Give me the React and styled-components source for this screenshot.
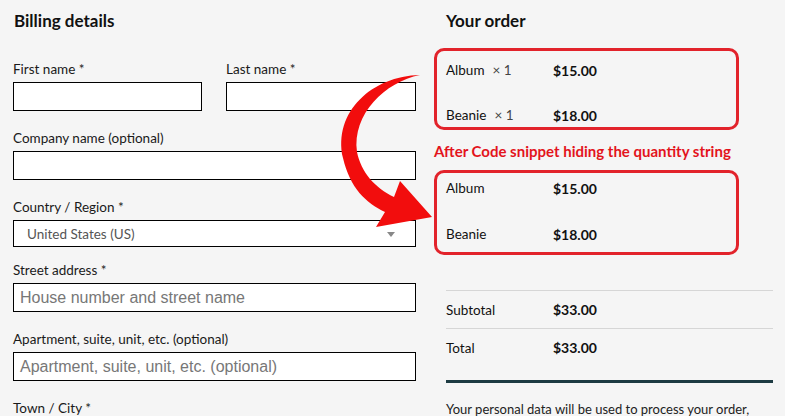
import React from 'react';
import styled, { createGlobalStyle } from 'styled-components';

const GlobalStyle = createGlobalStyle`
  html, body {
    margin: 0;
    background: #f5f5f5;
    font-family: Lato, "Open Sans", sans-serif;
    color: #111;
  }
`;

const fields = [
  { label: 'Company name (optional)' },
  { label: 'Country / Region *', select: 'United States (US)' },
  { label: 'Street address *', placeholder: 'House number and street name' },
  { label: 'Apartment, suite, unit, etc. (optional)', placeholder: 'Apartment, suite, unit, etc. (optional)' },
  { label: 'Town / City *', noInput: true },
];

const before = [
  { name: 'Album', qty: '× 1', price: '$15.00' },
  { name: 'Beanie', qty: '× 1', price: '$18.00' },
];

const after = [
  { name: 'Album', price: '$15.00' },
  { name: 'Beanie', price: '$18.00' },
];

const App = () => {
  return (
    <>
      <GlobalStyle />
      <Page>
        <Billing>
          <Heading>Billing details</Heading>
          <NameRow>
            <Field>
              <Label>First name *</Label>
              <TextBox />
            </Field>
            <Field>
              <Label>Last name *</Label>
              <TextBox />
            </Field>
          </NameRow>
          {fields.map((f) => (
            <Field key={f.label} $tight={!!f.select}>
              <Label>{f.label}</Label>
              {f.select ? (
                <SelectBox>
                  {f.select}
                  <Caret />
                </SelectBox>
              ) : f.noInput ? null : (
                <TextBox>{f.placeholder && <Placeholder>{f.placeholder}</Placeholder>}</TextBox>
              )}
            </Field>
          ))}
        </Billing>

        <Order>
          <OrderHeading>Your order</OrderHeading>
          <RedBox $pad="7px 9px 0" $gap={21}>
            {before.map((r) => (
              <ItemRow key={r.name}>
                <span>
                  {r.name}
                  <Qty>{r.qty}</Qty>
                </span>
                <Price>{r.price}</Price>
              </ItemRow>
            ))}
          </RedBox>
          <Caption>After Code snippet hiding the quantity string</Caption>
          <RedBox $pad="3px 9px 6px" $gap={22}>
            {after.map((r) => (
              <ItemRow key={r.name}>
                <span>{r.name}</span>
                <Price>{r.price}</Price>
              </ItemRow>
            ))}
          </RedBox>
          <Totals>
            <TotalRow>
              <span>Subtotal</span>
              <Price>$33.00</Price>
            </TotalRow>
            <TotalRow>
              <span>Total</span>
              <Price>$33.00</Price>
            </TotalRow>
            <ThickRule />
            <Note>Your personal data will be used to process your order,</Note>
          </Totals>
        </Order>

        <Arrow viewBox="0 0 785 416" width="785" height="416">
          <path
            d="M 420 75 C 372 76, 333 112, 343 158 C 350 188, 366 203, 385 212 L 376 227 L 432 217 L 400 181 L 394 197 C 375 188, 361 172, 357 152 C 352 114, 385 82, 420 75 Z"
            fill="#f20d0d"
          />
        </Arrow>
      </Page>
    </>
  );
};

export default App;

const Page = styled.div`
  position: relative;
  display: grid;
  grid-template-columns: 403px 339px;
  column-gap: 18px;
  padding: 10px 0 0 13px;
  height: 416px;
  box-sizing: border-box;
  overflow: hidden;
`;

const Billing = styled.div`
  display: flex;
  flex-direction: column;
`;

const Heading = styled.h2`
  margin: 0 0 27px 1px;
  font-size: 17px;
  line-height: 22px;
  font-weight: 700;
`;

const NameRow = styled.div`
  display: grid;
  grid-template-columns: 189px 190px;
  column-gap: 24px;
`;

const Field = styled.div`
  display: flex;
  flex-direction: column;
  margin-bottom: ${(p) => (p.$tight ? 13 : 17)}px;
`;

const Label = styled.div`
  font-size: 13.5px;
  line-height: 20px;
  margin-bottom: 3px;
  color: #1a1a1a;
`;

const TextBox = styled.div`
  height: 29px;
  box-sizing: border-box;
  border: 1px solid #000;
  background: #fff;
  display: flex;
  align-items: center;
  padding-left: 6px;
`;

const Placeholder = styled.span`
  font-family: "Liberation Sans", Arial, sans-serif;
  font-size: 16px;
  color: #777;
`;

const SelectBox = styled.div`
  position: relative;
  height: 27px;
  box-sizing: border-box;
  border: 1px solid #000;
  background: #fff;
  display: flex;
  align-items: center;
  padding-left: 13px;
  font-size: 13.5px;
  color: #555;
`;

const Caret = styled.span`
  position: absolute;
  right: 20px;
  top: 11px;
  border-left: 4px solid transparent;
  border-right: 4px solid transparent;
  border-top: 5px solid #888;
`;

const Order = styled.div`
  display: flex;
  flex-direction: column;
`;

const OrderHeading = styled.h2`
  margin: 0 0 16px 12px;
  font-size: 17px;
  line-height: 22px;
  font-weight: 700;
`;

const RedBox = styled.div`
  width: 305px;
  box-sizing: border-box;
  border: 3px solid #e2232b;
  border-radius: 10px;
  padding: ${(p) => p.$pad};
  display: flex;
  flex-direction: column;
  gap: ${(p) => p.$gap}px;
`;

const ItemRow = styled.div`
  display: grid;
  grid-template-columns: 107px 1fr;
  align-items: center;
  height: 24px;
  font-size: 13.5px;
`;

const Qty = styled.span`
  margin-left: 8px;
  color: #444;
`;

const Price = styled.span`
  font-size: 14px;
  font-weight: 700;
`;

const Caption = styled.div`
  margin: 11px 0 9px;
  font-size: 15px;
  line-height: 20px;
  font-weight: 700;
  color: #e3141c;
  white-space: nowrap;
`;

const Totals = styled.div`
  margin: 35px 0 0 12px;
  border-top: 1px solid #d6d6d6;
`;

const TotalRow = styled.div`
  display: grid;
  grid-template-columns: 107px 1fr;
  align-items: center;
  height: 37px;
  font-size: 13.5px;
  & + & {
    border-top: 1px solid #d6d6d6;
  }
`;

const ThickRule = styled.div`
  margin-top: 14px;
  height: 3px;
  background: #1d3b42;
`;

const Note = styled.p`
  margin: 16px 0 0;
  font-size: 13px;
  line-height: 20px;
  color: #222;
  white-space: nowrap;
`;

const Arrow = styled.svg`
  position: absolute;
  left: 0;
  top: 0;
  pointer-events: none;
`;
